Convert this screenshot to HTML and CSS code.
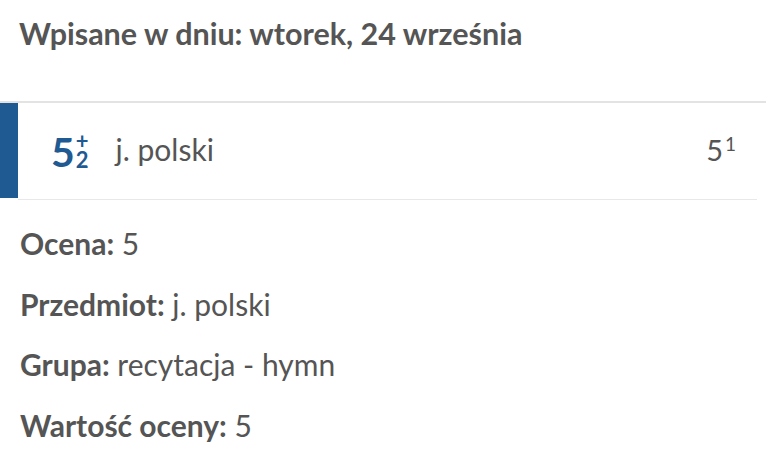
FILE: index.html
```html
<!DOCTYPE html>
<html lang="pl">
<head>
    <meta charset="UTF-8">
    <meta name="viewport" content="width=device-width, initial-scale=1.0">
    <title>Szczegóły oceny</title>
    <link rel="stylesheet" href="styles.css">
</head>
<body>
    <div class="naglowek">Wpisane w dniu: wtorek, 24 września</div>

    <div class="ocenaKarta">
        <div class="pasek"></div>
        <div class="ocenaTresc">
            <div class="ocenaZnak">
                <span class="ocenaCyfra">5</span>
                <span class="ocenaIndeks">
                    <span>+</span>
                    <span>2</span>
                </span>
            </div>
            <div class="ocenaPrzedmiot">j. polski</div>
            <div class="ocenaWaga">5<sup>1</sup></div>
        </div>
    </div>

    <div class="szczegoly">
        <div class="wiersz"><b>Ocena:</b> 5</div>
        <div class="wiersz"><b>Przedmiot:</b> j. polski</div>
        <div class="wiersz"><b>Grupa:</b> recytacja - hymn</div>
        <div class="wiersz"><b>Wartość oceny:</b> 5</div>
        <div class="wiersz"><b>Nauczyciel:</b> Anna Kowalska</div>
    </div>
</body>
</html>
```

FILE: styles.css
```css
body {
  font-family: Lato, "Open Sans", sans-serif;
  color: #555;
  margin: 0;
  background: #fff;
  overflow: hidden;
}
.naglowek {
  font-size: 30.5px;
  font-weight: 700;
  padding: 15px 19px 0 19px;
  height: 86px;
}
.ocenaKarta {
  display: flex;
  border-top: 2px solid #e3e3e3;
}
.pasek {
  width: 18px;
  background-color: #1f5a92;
  height: 95px;
}
.ocenaTresc {
  flex: 1;
  display: flex;
  align-items: center;
  padding-left: 33px;
  margin-right: 9px;
  border-bottom: 1px solid #e8e8e8;
  height: 96px;
}
.ocenaZnak {
  display: flex;
  align-items: center;
  color: #1f5a92;
  font-weight: 700;
}
.ocenaCyfra {
  font-size: 41px;
  line-height: 1;
}
.ocenaIndeks {
  display: flex;
  flex-direction: column;
  font-size: 22px;
  line-height: 19px;
  margin-left: 1px;
  margin-top: -2px;
}
.ocenaPrzedmiot {
  font-size: 30px;
  margin-left: 27px;
  margin-top: -4px;
}
.ocenaWaga {
  margin-left: auto;
  margin-right: 21px;
  font-size: 29px;
  margin-top: -4px;
}
.ocenaWaga sup {
  font-size: 19px;
  vertical-align: 10px;
  line-height: 0;
  margin-left: 2px;
}
.szczegoly {
  padding: 0 20px;
  font-size: 30px;
}
.wiersz {
  height: 60.5px;
  line-height: 60.5px;
}
.wiersz:first-child {
  margin-top: 13px;
}
.wiersz b {
  font-weight: 700;
}
```
